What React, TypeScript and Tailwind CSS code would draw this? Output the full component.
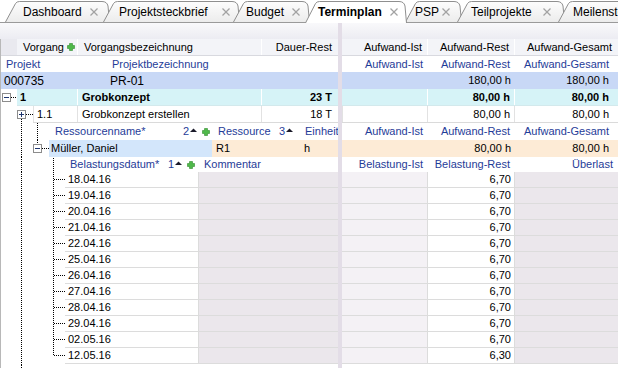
import React from "react";

const BLUE = "text-[#1f3c98]";

function CloseX() {
  return (
    <svg width="8" height="8" viewBox="0 0 8 8" className="shrink-0">
      <line x1="0.5" y1="0.5" x2="7.5" y2="7.5" stroke="#a3a3a3" strokeWidth="1.2" />
      <line x1="7.5" y1="0.5" x2="0.5" y2="7.5" stroke="#a3a3a3" strokeWidth="1.2" />
    </svg>
  );
}

function Tab({ label, w, cls, active, id }: { label: string; w: number; cls: string; active?: boolean; id: string }) {
  const h = active ? 23 : 22;
  const d = `M0.5 ${h} L10.5 3.5 Q11.8 1.5 14.5 1.5 L${w - 8} 1.5 Q${w - 3} 1.5 ${w - 2} 6 L${w - 0.5} ${h}`;
  return (
    <div className={`relative shrink-0 ${cls} ${active ? "z-10 h-[23px] -mb-px font-bold" : "h-[22px]"}`}>
      <svg width={w} height={h} className="absolute inset-0">
        <defs>
          <linearGradient id={id} x1="0" y1="0" x2="0" y2="1">
            <stop offset="0" stopColor={active ? "#ffffff" : "#fdfdfd"} />
            <stop offset="1" stopColor={active ? "#ffffff" : "#ececec"} />
          </linearGradient>
        </defs>
        <path d={d} fill={`url(#${id})`} stroke="#8f8f8f" strokeWidth="1" />
      </svg>
      <div className="relative flex h-[22px] items-center justify-between pt-[2px] text-[12px] text-black">
        <span className="whitespace-nowrap">{label}</span>
        <CloseX />
      </div>
    </div>
  );
}

function Plus() {
  return (
    <svg width="8" height="8" viewBox="0 0 8 8" className="shrink-0">
      <path d="M2.5 0.5h3v2h2v3h-2v2h-3v-2h-2v-3h2z" fill="#4fb94a" stroke="#2f8c2c" strokeWidth="0.6" />
    </svg>
  );
}

function SortUp({ n }: { n: string }) {
  return (
    <span className="flex items-center gap-[1px]">
      <span>{n}</span>
      <svg width="7" height="5" viewBox="0 0 7 5" className="mb-[2px]">
        <polygon points="0,4 3.5,0.5 7,4" fill="#1a1a2a" />
      </svg>
    </span>
  );
}

function Box({ x, y, minus }: { x: number; y: number; minus?: boolean }) {
  return (
    <g>
      <rect x={x + 0.5} y={y + 0.5} width="8" height="8" fill="#ffffff" stroke="#8c8c8c" />
      <line x1={x + 2} y1={y + 4.5} x2={x + 7} y2={y + 4.5} stroke="#1f3670" />
      {!minus && <line x1={x + 4.5} y1={y + 2} x2={x + 4.5} y2={y + 7} stroke="#1f3670" />}
    </g>
  );
}

const dot = { stroke: "#000", strokeDasharray: "1 1", strokeWidth: 1 };

const dates: [string, string][] = [
  ["18.04.16", "6,70"],
  ["19.04.16", "6,70"],
  ["20.04.16", "6,70"],
  ["21.04.16", "6,70"],
  ["22.04.16", "6,70"],
  ["25.04.16", "6,70"],
  ["26.04.16", "6,70"],
  ["27.04.16", "6,70"],
  ["28.04.16", "6,70"],
  ["29.04.16", "6,70"],
  ["02.05.16", "6,70"],
  ["12.05.16", "6,30"],
];

export default function App() {
  return (
    <div className="w-[618px] h-[368px] overflow-hidden bg-white font-['Liberation_Sans',Arial,sans-serif] text-[11px] leading-none text-black flex flex-col">
      {/* Tab bar */}
      <div className="flex h-[23px] shrink-0 items-end border-b border-[#9a9a9a] bg-white">
        <Tab id="t1" label="Dashboard" w={105} cls="w-[105px] ml-[5px] pl-[18px] pr-[12px]" />
        <Tab id="t2" label="Projektsteckbrief" w={137} cls="w-[137px] -ml-[7px] pl-[16px] pr-[10px]" />
        <Tab id="t3" label="Budget" w={77} cls="w-[77px] -ml-[7px] pl-[13px] pr-[10px]" />
        <Tab id="t4" label="Terminplan" w={102} cls="w-[102px] -ml-[5px] pl-[13px] pr-[9px]" active />
        <Tab id="t5" label="PSP" w={57} cls="w-[57px] -ml-[2px] pl-[10px] pr-[12px]" />
        <Tab id="t6" label="Teilprojekte" w={108} cls="w-[108px] -ml-[5px] pl-[14px] pr-[14px]" />
        <Tab id="t7" label="Meilensteine" w={110} cls="w-[110px] -ml-[7px] pl-[15px] pr-[12px]" />
      </div>

      <div className="flex flex-1 min-h-0">
        {/* Left pane */}
        <div className="flex w-[338px] shrink-0 flex-col">
          <div className="h-[16px] shrink-0 bg-gradient-to-b from-[#f9f9fb] to-[#ececf2]" />
          <div className="flex flex-1 flex-col border-l border-[#b8b8b8]">
            {/* header */}
            <div className="flex h-[17px] shrink-0 border-b border-[#d8d9df] bg-[#f3f4f8]">
              <div className="w-[16px] bg-[#e9e9ef]" />
              <div className="flex w-[61px] items-center gap-[3px] border-r border-white pl-[6px]">
                <span>Vorgang</span>
                <Plus />
              </div>
              <div className="flex w-[184px] items-center border-r border-white pl-[6px]">Vorgangsbezeichnung</div>
              <div className="flex flex-1 items-center justify-end pr-[6px]">Dauer-Rest</div>
            </div>
            {/* Projekt header */}
            <div className={`flex h-[16px] shrink-0 items-center ${BLUE}`}>
              <div className="w-[107px] pl-[5px]">Projekt</div>
              <div className="pl-[4px]">Projektbezeichnung</div>
            </div>
            {/* PR row */}
            <div className="flex h-[17px] shrink-0 items-center bg-[#c8d8f6] text-[12px]">
              <div className="w-[106px] pl-[3px]">000735</div>
              <div className="pl-[3px]">PR-01</div>
            </div>
            {/* Row 1 */}
            <div className="flex h-[17px] shrink-0">
              <svg width="16" height="17" className="shrink-0">
                <Box x={1} y={4} minus />
                <line x1="10" y1="8.5" x2="16" y2="8.5" {...dot} />
              </svg>
              <div className="flex flex-1 border-b border-[#d3e9ec] bg-[#d6f3f7] font-bold">
                <div className="flex w-[61px] items-center border-r border-white pl-[3px]">1</div>
                <div className="flex w-[184px] items-center border-r border-white pl-[4px]">Grobkonzept</div>
                <div className="flex flex-1 items-center justify-end pr-[6px]">23 T</div>
              </div>
            </div>
            {/* Row 1.1 */}
            <div className="flex h-[17px] shrink-0">
              <svg width="32" height="17" className="shrink-0">
                <line x1="20.5" y1="13" x2="20.5" y2="17" {...dot} />
                <Box x={16} y={4} />
                <line x1="25" y1="8.5" x2="32" y2="8.5" {...dot} />
              </svg>
              <div className="flex flex-1 border-b border-[#dadada]">
                <div className="flex w-[45px] items-center border-r border-l border-[#e2e2e2] pl-[3px]">1.1</div>
                <div className="flex w-[184px] items-center border-r border-[#e2e2e2] pl-[4px]">Grobkonzept erstellen</div>
                <div className="flex flex-1 items-center justify-end pr-[6px]">18 T</div>
              </div>
            </div>
            {/* Resource header */}
            <div className={`flex h-[17px] shrink-0 ${BLUE}`}>
              <svg width="48" height="17" className="shrink-0">
                <line x1="20.5" y1="0" x2="20.5" y2="17" {...dot} />
                <line x1="36.5" y1="0" x2="36.5" y2="17" {...dot} />
              </svg>
              <div className="flex w-[163px] items-center justify-between pl-[6px] pr-[2px]">
                <span>Ressourcenname*</span>
                <span className="flex items-center gap-[5px]">
                  <SortUp n="2" />
                  <Plus />
                </span>
              </div>
              <div className="flex w-[88px] items-center justify-between pl-[6px] pr-[7px]">
                <span>Ressource</span>
                <SortUp n="3" />
              </div>
              <div className="flex flex-1 items-center overflow-hidden whitespace-nowrap pl-[5px]">Einheit</div>
            </div>
            {/* Müller */}
            <div className="flex h-[17px] shrink-0">
              <svg width="48" height="17" className="shrink-0">
                <line x1="20.5" y1="0" x2="20.5" y2="17" {...dot} />
                <line x1="36.5" y1="0" x2="36.5" y2="4" {...dot} />
                <Box x={32} y={4} minus />
                <line x1="41" y1="8.5" x2="48" y2="8.5" {...dot} />
              </svg>
              <div className="flex w-[163px] items-center bg-[#d3e6fb] pl-[2px]">Müller, Daniel</div>
              <div className="flex flex-1 bg-[#fdebd6]">
                <div className="flex w-[88px] items-center pl-[4px]">R1</div>
                <div className="flex flex-1 items-center pl-[4px]">h</div>
              </div>
            </div>
            {/* Belastung header */}
            <div className={`flex h-[15px] shrink-0 ${BLUE}`}>
              <svg width="64" height="15" className="shrink-0">
                <line x1="20.5" y1="0" x2="20.5" y2="15" {...dot} />
                <line x1="52.5" y1="1" x2="52.5" y2="15" {...dot} />
              </svg>
              <div className="flex w-[134px] items-center justify-between pl-[5px] pr-[4px]">
                <span>Belastungsdatum*</span>
                <span className="flex items-center gap-[5px]">
                  <SortUp n="1" />
                  <Plus />
                </span>
              </div>
              <div className="flex flex-1 items-center pl-[5px]">Kommentar</div>
            </div>
            {/* Dates */}
            {dates.map(([d], i) => (
              <div key={d} className="flex h-[16px] shrink-0">
                <svg width="64" height="16" className="shrink-0">
                  <line x1="20.5" y1="0" x2="20.5" y2="16" {...dot} />
                  <line x1="52.5" y1="0" x2="52.5" y2={i === dates.length - 1 ? 8 : 16} {...dot} />
                  <line x1="53" y1="7.5" x2="64" y2="7.5" {...dot} />
                </svg>
                <div className="flex w-[134px] items-center border-b border-r border-[#dcdcdc] bg-white pl-[3px]">{d}</div>
                <div className="flex-1 border-b border-[#dcdcdc] bg-[#ebe7ec]" />
              </div>
            ))}
            <div className="ml-[20px] flex-1 border-l border-dotted border-black" />
          </div>
        </div>

        {/* Splitter */}
        <div className="w-[4px] shrink-0 bg-[#e3dde7]" />

        {/* Right pane */}
        <div className="flex flex-1 flex-col">
          <div className="h-[16px] shrink-0 bg-gradient-to-b from-[#f9f9fb] to-[#ececf2]" />
          <div className="flex h-[17px] shrink-0 border-b border-[#d8d9df] bg-[#f3f4f8]">
            <div className="flex w-[86px] items-center justify-end border-r border-white pr-[5px]">Aufwand-Ist</div>
            <div className="flex w-[87px] items-center justify-end border-r border-white pr-[5px]">Aufwand-Rest</div>
            <div className="flex flex-1 items-center justify-end pr-[6px]">Aufwand-Gesamt</div>
          </div>
          <div className={`flex h-[16px] shrink-0 ${BLUE}`}>
            <div className="flex w-[86px] items-center justify-end pr-[5px]">Aufwand-Ist</div>
            <div className="flex w-[87px] items-center justify-end pr-[5px]">Aufwand-Rest</div>
            <div className="flex flex-1 items-center justify-end pr-[9px]">Aufwand-Gesamt</div>
          </div>
          <div className="flex h-[17px] shrink-0 bg-[#c8d8f6]">
            <div className="w-[86px]" />
            <div className="flex w-[87px] items-center justify-end pr-[4px]">180,00 h</div>
            <div className="flex flex-1 items-center justify-end pr-[9px]">180,00 h</div>
          </div>
          <div className="flex h-[17px] shrink-0 border-b border-[#d3e9ec] bg-[#d6f3f7] font-bold">
            <div className="w-[86px] border-r border-white" />
            <div className="flex w-[87px] items-center justify-end border-r border-white pr-[4px]">80,00 h</div>
            <div className="flex flex-1 items-center justify-end pr-[9px]">80,00 h</div>
          </div>
          <div className="flex h-[17px] shrink-0 border-b border-[#dadada]">
            <div className="w-[86px] border-r border-l border-[#e2e2e2]" />
            <div className="flex w-[87px] items-center justify-end border-r border-[#e2e2e2] pr-[4px]">80,00 h</div>
            <div className="flex flex-1 items-center justify-end pr-[9px]">80,00 h</div>
          </div>
          <div className={`flex h-[17px] shrink-0 ${BLUE}`}>
            <div className="flex w-[86px] items-center justify-end pr-[5px]">Aufwand-Ist</div>
            <div className="flex w-[87px] items-center justify-end pr-[5px]">Aufwand-Rest</div>
            <div className="flex flex-1 items-center justify-end pr-[9px]">Aufwand-Gesamt</div>
          </div>
          <div className="flex h-[17px] shrink-0 bg-[#fdebd6]">
            <div className="w-[86px]" />
            <div className="flex w-[87px] items-center justify-end pr-[4px]">80,00 h</div>
            <div className="flex flex-1 items-center justify-end pr-[9px]">80,00 h</div>
          </div>
          <div className={`flex h-[15px] shrink-0 ${BLUE}`}>
            <div className="flex w-[86px] items-center justify-end pr-[5px]">Belastung-Ist</div>
            <div className="flex w-[87px] items-center justify-end pr-[5px]">Belastung-Rest</div>
            <div className="flex flex-1 items-center justify-end pr-[5px]">Überlast</div>
          </div>
          {dates.map(([d, v]) => (
            <div key={d} className="flex h-[16px] shrink-0">
              <div className="w-[86px] border-b border-r border-[#dcdcdc] bg-[#f4f1f5]" />
              <div className="flex w-[87px] items-center justify-end border-b border-r border-[#dcdcdc] bg-white pr-[3px]">{v}</div>
              <div className="flex-1 border-b border-[#dcdcdc] bg-[#ebe7ec]" />
            </div>
          ))}
          <div className="flex-1" />
        </div>
      </div>
    </div>
  );
}
